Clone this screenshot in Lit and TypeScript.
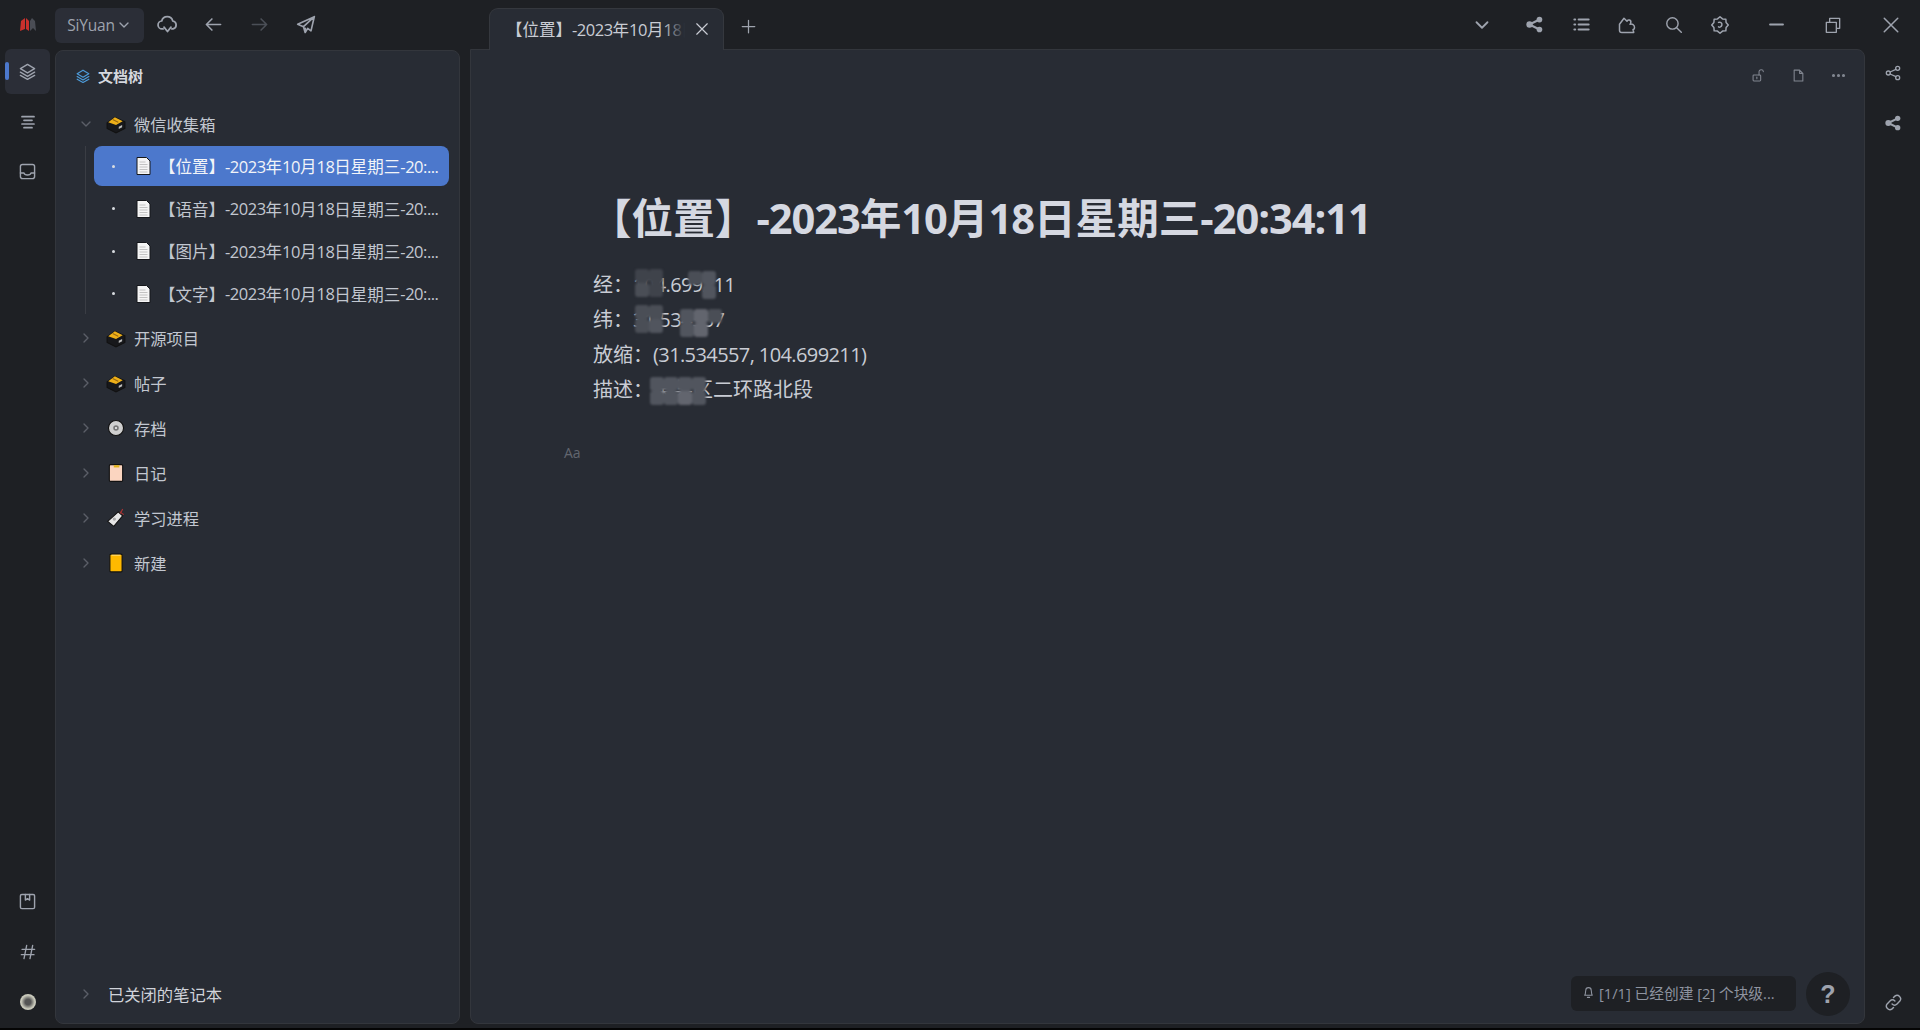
import { LitElement, html, css, svg } from "lit";
import { customElement } from "lit/decorators.js";

const I = (body: unknown, size = 20, cls = "") => html`<svg class="${cls}" width="${size}" height="${size}" viewBox="0 0 24 24" fill="none" stroke="currentColor" stroke-width="2" stroke-linecap="round" stroke-linejoin="round">${body}</svg>`;

const gearPts = Array.from({ length: 16 }, (_, i) => {
  const a = (i * Math.PI) / 8 - Math.PI / 2;
  const r = i % 2 === 0 ? 11 : 8.8;
  return `${(12 + r * Math.cos(a)).toFixed(2)},${(12 + r * Math.sin(a)).toFixed(2)}`;
}).join(" ");

const icons = {
  cloud: svg`<path d="M7 17H6a4.5 4.5 0 0 1-.6-9A6.5 6.5 0 0 1 18 8a4.6 4.6 0 0 1 .4 9H17"/><path d="M8 15l4 5 4-5"/>`,
  back: svg`<path d="M21 12H3M10 5l-7 7 7 7"/>`,
  fwd: svg`<path d="M3 12h18M14 5l7 7-7 7"/>`,
  send: svg`<path d="M22 2L2 11l7 3 2 7 3-5 4 3zM22 2L9 14M11 21v-5"/>`,
  chevD: svg`<path d="M6 9l6 6 6-6"/>`,
  chevR: svg`<path d="M9 6l6 6-6 6"/>`,
  shareF: svg`<g fill="currentColor" stroke="none"><circle cx="19" cy="5" r="4"/><circle cx="5" cy="12" r="4.5"/><circle cx="19" cy="19" r="4"/></g><path d="M19 5L5 12l14 7" stroke-width="3"/>`,
  shareO: svg`<circle cx="19" cy="5" r="3"/><circle cx="5" cy="12" r="3"/><circle cx="19" cy="19" r="3"/><path d="M16.4 6.5L7.6 10.5M7.6 13.5l8.8 4"/>`,
  list: svg`<path d="M8 5h14M8 12h14M8 19h14" stroke-width="3"/><path d="M2 5h1M2 12h1M2 19h1" stroke-width="3"/>`,
  puzzle: svg`<path d="M2 11l6-8 4 4c1-3 6-2 5 2 0 1-1 2-1 2 3-1 6 1 6 4 0 2-1 3-2 3l1 4H5c-2 0-3-1-3-3z"/>`,
  search: svg`<circle cx="10.5" cy="10.5" r="8"/><path d="M16.5 16.5L23 23"/>`,
  gear: svg`<polygon points="${gearPts}"/><path d="M10 8.500c3-1 5 1 4.500 3.500s-3 3.500-4.500 2.500"/>`,
  min: svg`<path d="M3 12h18" stroke-width="3"/>`,
  restore: svg`<path d="M2 8h15v15H2zM7 8V2h15v15h-5"/>`,
  close: svg`<path d="M3 3l18 18M21 3L3 21"/>`,
  plus: svg`<path d="M12 2v20M2 12h20"/>`,
  layers: svg`<path d="M12 2l10 6-10 6L2 8z"/><path d="M2 13l10 6 10-6M2 17.500l10 5.500 10-5.500"/>`,
  outline: svg`<path d="M3 4h18M6 9.500h12M3 15h18M6 20.500h12" stroke-width="2.600"/>`,
  inbox: svg`<rect x="2" y="2" width="20" height="20" rx="3"/><path d="M2 14h5c1 4 9 4 10 0h5"/>`,
  book: svg`<rect x="2" y="2" width="20" height="20" rx="2"/><path d="M9 2v8l3-2 3 2V2"/>`,
  hash: svg`<path d="M10 2L6 22M19 2l-4 20M3 8h19M2 16h19"/>`,
  link: svg`<path d="M10 14a5 5 0 0 0 7 0l4-4a5 5 0 0 0-7-7l-2 2"/><path d="M14 10a5 5 0 0 0-7 0l-4 4a5 5 0 0 0 7 7l2-2"/>`,
  lock: svg`<rect x="2" y="11" width="14" height="11" rx="1.500"/><path d="M13 11V6a4 4 0 0 1 8-1"/><path d="M9 15v3"/>`,
  doc: svg`<path d="M4 2h10l6 6v14H4zM14 2v6h6"/>`,
  more: svg`<circle cx="4" cy="12" r="1.500" fill="currentColor"/><circle cx="12" cy="12" r="1.500" fill="currentColor"/><circle cx="20" cy="12" r="1.500" fill="currentColor"/>`,
  bell: svg`<path d="M5 17c2-2 1-6 2-9a5 5 0 0 1 10 0c1 3 0 7 2 9zM10 21h4"/>`,
};

const box = html`<svg class="emoji" width="20" height="20" viewBox="0 0 18 18">
  <path d="M1 8l7-5 9 4v6l-8 4-8-4z" fill="#17181b" stroke="#111" />
  <path d="M2 7.500l6-4.500 7 3.500-6 3.500z" fill="#eeb019"/>
  <path d="M6 5l5 2.500" stroke="#9a6a10" />
  <path d="M11.500 11.500l3-1.500v2l-3 1.500z" fill="#bbb"/>
</svg>`;
const disc = html`<svg class="emoji" width="20" height="20" viewBox="0 0 18 18"><circle cx="9" cy="9" r="6.800" fill="#cfcfcf" stroke="#111"/><circle cx="9" cy="9" r="2.500" fill="#777"/><circle cx="9" cy="9" r="1" fill="#eee"/></svg>`;
const diary = html`<svg class="emoji" width="20" height="20" viewBox="0 0 18 18"><rect x="3" y="1.500" width="12" height="15" rx="1" fill="#fbd5c0" stroke="#111"/><rect x="7" y="2" width="5" height="2" fill="#e2b31a"/></svg>`;
const tag = html`<svg class="emoji" width="20" height="20" viewBox="0 0 18 18"><path d="M1.500 12L11 3.500l4 3.500-8 9.500z" fill="#e6e6e6" stroke="#111"/><path d="M13 5l2-4M12.500 3.500L16 6" stroke="#a33" fill="none"/><circle cx="7.500" cy="10" r="1.500" fill="#aaa"/></svg>`;
const nb = html`<svg class="emoji" width="20" height="20" viewBox="0 0 18 18"><rect x="3.500" y="1" width="11" height="16" rx="1" fill="#ffb900" stroke="#111"/><path d="M5 2h8" stroke="#ffdb70"/></svg>`;
const page = html`<svg class="page" width="15" height="18" viewBox="0 0 15 18"><path d="M1 .5h9.500L14 4v13.500H1z" fill="#f5f5f5" stroke="#15171b"/><path d="M3.500 5h6M3.500 7.500h8M3.500 10h8M3.500 12.500h8M3.500 15h8" stroke="#c2c2c2"/></svg>`;

const docs = ["位置", "语音", "图片", "文字"];
const notebooks = [
  ["开源项目", box], ["帖子", box], ["存档", disc], ["日记", diary], ["学习进程", tag], ["新建", nb],
] as const;

/* Censoring blobs of the source image: rows of mosaic tiles. */
const mosaic = (left: number, top: number, tiles: string[][]) => html`<span class="m" style="left:${left}px;top:${top}px">
  ${tiles.map((r) => html`<span class="mr">${r.map((c) => html`<i style="background:${c || "transparent"}"></i>`)}</span>`)}
</span>`;

@customElement("app-root")
export class AppRoot extends LitElement {
  static styles = css`
    :host {
      display: flex; flex-direction: column; width: 1920px; height: 1030px; overflow: hidden;
      background: #1e2024; color: #c9ccd4; box-sizing: border-box; border-bottom: 2px solid #050505;
      font-family: "Open Sans", "Noto Sans CJK SC", sans-serif;
    }
    svg { display: block; flex: none; }
    .top { display: flex; align-items: center; height: 49px; flex: none; color: #9ea3ae; position: relative; z-index: 2; }
    .logo { width: 55px; display: flex; justify-content: center; }
    .ws { width: 89px; height: 35px; box-sizing: border-box; padding-bottom: 2px; background: #2b2e37; border-radius: 6px; display: flex; align-items: center; justify-content: center; gap: 1px; font-size: 15.500px; font-weight: 500; letter-spacing: -.2px; margin-top: 2px; }
    .ib { width: 46.250px; height: 36px; display: flex; align-items: center; justify-content: center; flex: none; }
    .dim { color: #4b4f57; }
    .tab { margin: 8px 0 -1px 160px; width: 235px; height: 42px; box-sizing: border-box; align-self: flex-start; background: #282c34; border: 1px solid #35383e; border-bottom: 0; border-radius: 9px 9px 0 0; display: flex; align-items: center; padding: 0 14px 2px 16px; font-size: 16.500px; color: #c9ccd4; white-space: nowrap; }
    .tab .t { flex: 1; overflow: hidden; margin-right: 10px; position: relative; }
    .tab .t::after { content: ""; position: absolute; right: 0; top: 0; bottom: 0; width: 22px; background: linear-gradient(to right, rgba(40,44,52,0), #282c34); }
    .plus { width: 48px; margin-top: 3px; }
    .grow { flex: 1; }
    .win { width: 58px; }
    .win.first { width: 56px; margin-left: 5px; }
    .chev { margin-right: 7px; }
    .main { display: flex; flex: 1; min-height: 0; padding-bottom: 4px; }
    .ldock { width: 55px; flex: none; display: flex; flex-direction: column; align-items: center; color: #9ea3ae; }
    .di { width: 45px; height: 45px; margin-bottom: 5px; display: flex; align-items: center; justify-content: center; border-radius: 6px; position: relative; flex: none; }
    .di:last-child { margin-bottom: 0; }
    .di.on { background: #2b2e37; }
    .di.on::before { content: ""; position: absolute; left: 0; top: 13px; width: 4px; height: 18px; border-radius: 2px; background: #4c78cc; }
    .sp { flex: 1; }
    .avatar { width: 16px; height: 16px; border-radius: 50%; background: radial-gradient(circle, #555 25%, #c9c9bb 60%); }
    .side { width: 405px; flex: none; margin-top: 1px; box-sizing: border-box; background: #282c34; border: 1px solid #33363c; border-radius: 8px; display: flex; flex-direction: column; padding: 0 10px 0 0; }
    .sh { height: 49px; display: flex; align-items: center; padding-left: 20px; gap: 8px; font-size: 15px; font-weight: 700; color: #d5d8df; margin-bottom: 1px; flex: none; }
    .sh svg { color: #4d9bd9; }
    .row { display: flex; align-items: center; height: 45px; flex: none; font-size: 16.300px; color: #c2c7d0; white-space: nowrap; }
    .arrow { width: 22px; margin-left: 19px; color: #5b5f68; display: flex; justify-content: center; }
    .emoji { margin-left: 9px; margin-right: 8px; }
    .nb1 { height: 45px; }
    .docs { margin-left: 29px; border-left: 1px solid #3a3d44; padding-left: 8px; display: flex; flex-direction: column; gap: 2.500px; margin-bottom: 2px; }
    .doc { height: 40px; border-radius: 8px; display: flex; align-items: center; font-size: 16.500px; color: #c2c7d0; white-space: nowrap; }
    .doc.on { background: #4c78cc; color: #f2f4f8; }
    .bullet { width: 3px; height: 3px; background: #d8dbe0; border-radius: 50%; margin: 0 21px 0 18px; flex: none; }
    .page { margin-right: 8px; }
    .l { letter-spacing: -.03em; }
    .closed { margin-top: auto; height: 50px; padding-bottom: 8px; box-sizing: border-box; }
    .closed span { margin-left: 11px; color: #d0d3da; }
    .ed { flex: 1; min-width: 0; margin-left: 10px; background: #282c34; box-sizing: border-box; border: 1px solid #33363c; border-radius: 0 8px 8px 8px; position: relative; padding: 0 0 0 122px; }
    .etools { position: absolute; top: 16px; right: 6px; display: flex; color: #80858f; }
    .etools div { width: 40px; height: 18px; display: flex; justify-content: center; align-items: center; }
    h1 { margin: 0 0 0 -3px; padding: 141px 0 0 0; font-size: 41.600px; line-height: 54px; font-weight: 700; color: #d5d8e1; white-space: nowrap; height: 54px; }
    h1 .l { letter-spacing: -.025em; }
    .body { margin: 22px 0 0 0; font-size: 20px; color: #c9ccd4; }
    .body p { margin: 0; height: 35px; line-height: 35px; position: relative; }
    .m { position: absolute; display: flex; flex-direction: column; filter: blur(1.2px); line-height: 0; }
    .mr { display: flex; }
    .m i { display: block; width: 14px; height: 14px; border-radius: 3px; }
    .aa { position: absolute; left: 93px; top: 393px; font-size: 14px; color: #62666f; }
    .note { position: absolute; left: 1100px; top: 926px; width: 225px; height: 35px; box-sizing: border-box; background: #1e2024; border-radius: 6px; display: flex; align-items: center; padding: 0 0 2px 11px; gap: 4px; font-size: 14.700px; color: #8f94a0; white-space: nowrap; }
    .help { position: absolute; left: 1335px; top: 922px; width: 44px; height: 44px; border-radius: 50%; background: #1e2024; color: #9ea3ae; font: 700 25px "Liberation Sans", sans-serif; display: flex; align-items: center; justify-content: center; }
    .rdock { width: 55px; flex: none; display: flex; flex-direction: column; align-items: center; color: #9ea3ae; }
    .ri { height: 50px; width: 100%; display: flex; align-items: center; justify-content: center; margin-left: 1px; flex: none; }
    .r1 { margin-top: -1px; }
    .r3 { margin-bottom: -3px; }
  `;

  render() {
    const title = (d: string) => html`【${d}】<span class="l">-2023</span>年<span class="l">10</span>月<span class="l">18</span>日星期三<span class="l">-20:...</span>`;
    const d1 = "#3f434b", d2 = "#4a4e56", g1 = "#51555e", g2 = "#62656e";
    return html`
      <div class="top">
        <div class="logo"><svg width="17" height="15" viewBox="0 0 17 15"><path d="M1 14l1-10 4-3v11z" fill="#c9302c"/><path d="M7 12V1l3 3v10z" fill="#c9302c"/><path d="M11 14V4l2-3 3 3 1 10-3-3z" fill="#4a4d55"/></svg></div>
        <div class="ws">SiYuan ${I(icons.chevD, 16)}</div>
        <div class="ib">${I(icons.cloud, 21)}</div>
        <div class="ib">${I(icons.back, 19)}</div>
        <div class="ib dim">${I(icons.fwd, 19)}</div>
        <div class="ib">${I(icons.send, 20)}</div>
        <div class="tab"><div class="t">【位置】<span class="l">-2023</span>年<span class="l">10</span>月<span class="l">18</span>日星期三</div>${I(icons.close, 14)}</div>
        <div class="ib plus">${I(icons.plus, 15)}</div>
        <div class="grow"></div>
        <div class="ib chev">${I(icons.chevD, 22)}</div>
        <div class="ib">${I(icons.shareF, 17)}</div>
        <div class="ib">${I(icons.list, 17)}</div>
        <div class="ib">${I(icons.puzzle, 18)}</div>
        <div class="ib">${I(icons.search, 17)}</div>
        <div class="ib">${I(icons.gear, 18)}</div>
        <div class="ib win first">${I(icons.min, 17)}</div>
        <div class="ib win">${I(icons.restore, 16)}</div>
        <div class="ib win">${I(icons.close, 18)}</div>
      </div>
      <div class="main">
        <div class="ldock">
          <div class="di on">${I(icons.layers, 17)}</div>
          <div class="di">${I(icons.outline, 16)}</div>
          <div class="di">${I(icons.inbox, 17)}</div>
          <div class="sp"></div>
          <div class="di">${I(icons.book, 17)}</div>
          <div class="di">${I(icons.hash, 16)}</div>
          <div class="di"><div class="avatar"></div></div>
        </div>
        <div class="side">
          <div class="sh">${I(icons.layers, 14)}文档树</div>
          <div class="row nb1"><div class="arrow">${I(icons.chevD, 16)}</div>${box}微信收集箱</div>
          <div class="docs">
            ${docs.map((d, i) => html`<div class="doc ${i === 0 ? "on" : ""}"><span class="bullet"></span>${page}${title(d)}</div>`)}
          </div>
          ${notebooks.map(([n, ic]) => html`<div class="row"><div class="arrow">${I(icons.chevR, 16)}</div>${ic}${n}</div>`)}
          <div class="row closed"><div class="arrow">${I(icons.chevR, 16)}</div><span>已关闭的笔记本</span></div>
        </div>
        <div class="ed">
          <div class="etools"><div>${I(icons.lock, 13)}</div><div>${I(icons.doc, 13)}</div><div>${I(icons.more, 15)}</div></div>
          <h1>【位置】<span class="l">-2023</span>年<span class="l">10</span>月<span class="l">18</span>日星期三<span class="l">-20:34:11</span></h1>
          <div class="body">
            <p>经：<span class="l">104.699211</span>${mosaic(42, 2, [[d1, d1], [d2, d1]])}${mosaic(95, 4, [[d2, g1], ["", g1]])}</p>
            <p>纬：<span class="l">31.534557</span>${mosaic(42, 3, [[d2, d2], [d2, g1]])}${mosaic(87, 7, [[g1, g2, d2], [g1, g2, ""]])}</p>
            <p>放缩：<span class="l">(31.534557, 104.699211)</span></p>
            <p>描述：某某区二环路北段${mosaic(57, 5, [[g1, g1, g1, g1], [g1, g1, g2, g1]])}</p>
          </div>
          <div class="aa">Aa</div>
          <div class="note">${I(icons.bell, 13)}<span>[1/1] 已经创建 [2] 个块级...</span></div>
          <div class="help">?</div>
        </div>
        <div class="rdock">
          <div class="ri r1">${I(icons.shareO, 16)}</div>
          <div class="ri">${I(icons.shareF, 16)}</div>
          <div class="sp"></div>
          <div class="ri r3">${I(icons.link, 17)}</div>
        </div>
      </div>
    `;
  }
}
